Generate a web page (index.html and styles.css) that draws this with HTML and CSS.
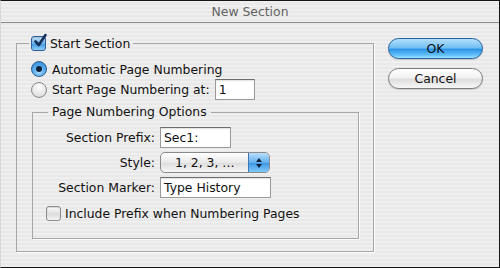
FILE: index.html
```html
<!DOCTYPE html>
<html lang="en">
<head>
    <meta charset="UTF-8">
    <title>New Section</title>
    <link rel="stylesheet" href="styles.css">
</head>
<body>

<div class="dialog">
    <div class="titlebar">New Section</div>

    <div class="content">
        <fieldset class="group outer">
            <legend class="legend-check">
                <span class="check on">
                    <svg width="16" height="16" viewBox="0 0 16 16"><path d="M3.5 8.5 L6.8 12 L13.5 2" fill="none" stroke="#14305a" stroke-width="2.6" stroke-linecap="round" stroke-linejoin="round"/></svg>
                </span>
                Start Section
            </legend>

            <div class="row first">
                <span class="radio on"></span>
                <span>Automatic Page Numbering</span>
            </div>
            <div class="row">
                <span class="radio"></span>
                <span>Start Page Numbering at:</span>
                <span class="field num">1</span>
            </div>

            <fieldset class="group inner">
                <legend>Page Numbering Options</legend>

                <div class="form-grid">
                    <span class="lbl">Section Prefix:</span>
                    <span class="field prefix">Sec1:</span>

                    <span class="lbl">Style:</span>
                    <span class="popup">
                        <span class="popup-text">1, 2, 3, …</span>
                        <span class="popup-arrows">
                            <svg width="8" height="12" viewBox="0 0 8 12"><path d="M4 1 L7 5 L1 5 Z M4 11 L7 7 L1 7 Z" fill="#10243f"/></svg>
                        </span>
                    </span>

                    <span class="lbl">Section Marker:</span>
                    <span class="field marker">Type History</span>
                </div>

                <div class="row last">
                    <span class="check"></span>
                    <span>Include Prefix when Numbering Pages</span>
                </div>
            </fieldset>
        </fieldset>

        <div class="buttons">
            <button type="button" class="btn default">OK</button>
            <button type="button" class="btn">Cancel</button>
        </div>
    </div>
</div>

</body>
</html>
```

FILE: styles.css
```css
body {
    margin: 0;
    font-family: "DejaVu Sans", sans-serif;
    font-size: 12.4px;
    color: #111;
}

.dialog {
    width: 500px;
    height: 268px;
    box-sizing: border-box;
    border: 1px solid #161616;
    border-left-color: #d8d8d8;
    background: repeating-linear-gradient(to bottom, #efefef 0, #efefef 2px, #e8e8e8 2px, #e8e8e8 4px);
    display: flex;
    flex-direction: column;
}

.titlebar {
    height: 21px;
    line-height: 21px;
    text-align: center;
    color: #626262;
    font-size: 12.4px;
    border-bottom: 1px solid #8c8c8c;
}

.content {
    display: flex;
    align-items: flex-start;
    padding: 12px 0 0 15px;
}

/* group boxes */
.group {
    margin: 0;
    border: 1px solid #a6a6a6;
    box-shadow: 1px 1px 0 #fbfbfb;
    min-width: 0;
}

.outer {
    width: 358px;
    box-sizing: border-box;
    padding: 7px 0 12px 15px;
}

.inner {
    width: 327px;
    box-sizing: border-box;
    margin: 4px 0 0 0;
    padding: 7px 0 16px 13px;
}

legend {
    padding: 0 4px;
    margin-left: 2px;
    line-height: 16px;
}

.legend-check {
    margin-left: -3px;
    padding: 0 3px 0 2px;
    display: flex;
    align-items: center;
    gap: 3px;
    line-height: 17px;
}

.row {
    display: flex;
    align-items: center;
    gap: 3px;
    height: 20px;
    margin-left: -1px;
}

.row + .row {
    height: 21px;
}

.row.last {
    margin-top: 6px;
    margin-left: 0;
    height: 18px;
}

/* aqua controls */
.check {
    width: 13px;
    height: 13px;
    border: 1px solid #8d8d8d;
    border-radius: 3px;
    background: linear-gradient(#fdfdfd, #dcdcdc 55%, #f4f4f4);
    box-shadow: inset 0 1px 1px rgba(0, 0, 0, 0.15);
    flex: none;
    margin-right: 1px;
}

.check.on {
    position: relative;
    border-color: #2d5f9b;
    background: linear-gradient(#c6e3fa, #6bb4ec 50%, #3c97e2 51%, #8fd0fb);
}

.check.on svg {
    position: absolute;
    left: 0;
    top: -4px;
}

.radio {
    width: 14px;
    height: 14px;
    border-radius: 50%;
    border: 1px solid #8a8a8a;
    background: radial-gradient(circle at 50% 30%, #ffffff, #e6e6e6 60%, #cfcfcf);
    flex: none;
    margin-right: 2px;
    position: relative;
}

.radio.on {
    border-color: #2c5f97;
    background: radial-gradient(circle at 50% 70%, #a9dcff, #4ea4e6 55%, #2d7fcf);
}

.radio.on::after {
    content: "";
    position: absolute;
    left: 4px;
    top: 4px;
    width: 6px;
    height: 6px;
    border-radius: 50%;
    background: #0f1f38;
}

.field {
    height: 21px;
    box-sizing: border-box;
    line-height: 19px;
    padding: 0 3px;
    background: #fff;
    border: 1px solid #9a9a9a;
    border-top-color: #6e6e6e;
    box-shadow: inset 0 1px 1px rgba(0, 0, 0, 0.12);
}

.field.num {
    width: 40px;
    margin-left: 2px;
}

.form-grid {
    display: grid;
    grid-template-columns: 109px auto;
    column-gap: 5px;
    row-gap: 4px;
    align-items: center;
    justify-items: start;
}

.lbl {
    justify-self: end;
}

.field.prefix {
    width: 71px;
}

.field.marker {
    width: 111px;
}

.popup {
    width: 110px;
    height: 21px;
    box-sizing: border-box;
    display: flex;
    border: 1px solid #8a8a8a;
    border-radius: 5px;
    overflow: hidden;
    background: linear-gradient(#ffffff, #e9e9e9 50%, #dcdcdc 51%, #f6f6f6);
}

.popup-text {
    flex: 1;
    line-height: 19px;
    padding-left: 14px;
}

.popup-arrows {
    width: 20px;
    display: flex;
    align-items: center;
    justify-content: center;
    border-left: 1px solid #3f77b5;
    background: linear-gradient(#b9defa, #63b1ee 50%, #3b95e2 51%, #7fc9fb);
}

/* buttons */
.buttons {
    display: flex;
    flex-direction: column;
    gap: 9px;
    margin: 3px 0 0 14px;
}

.btn {
    width: 95px;
    height: 21px;
    padding: 0;
    font-family: inherit;
    font-size: 12.4px;
    color: #111;
    border: 1px solid #7b7b7b;
    border-radius: 11px;
    background: linear-gradient(#ffffff, #f2f2f2 45%, #dedede 55%, #f7f7f7);
    box-shadow: 0 1px 1px rgba(0, 0, 0, 0.15);
}

.btn.default {
    border-color: #23609f;
    background: linear-gradient(#b4defc, #74c0f3 45%, #2f95e6 55%, #63c0fa 85%, #a6e4ff);
}
```
